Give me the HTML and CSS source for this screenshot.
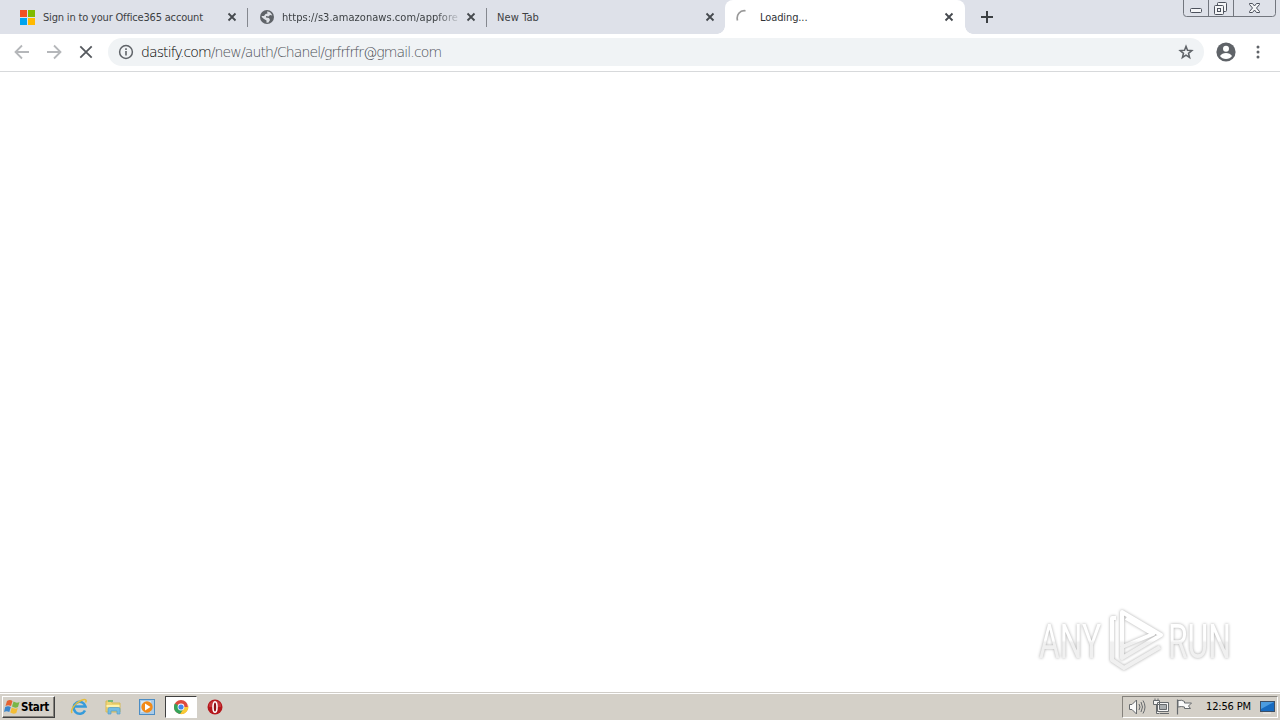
FILE: index.html
```html
<!DOCTYPE html>
<html lang="en">
<head>
<meta charset="utf-8">
<title>Loading...</title>
<link rel="stylesheet" href="styles.css">
</head>
<body>
<div class="screen">
  <header class="tabstrip">
    <div class="tab first">
      <svg class="fav" width="16" height="16"><path fill="#f25022" d="M0 1h7v7H0z"/><path fill="#7fba00" d="M8 1h7v7H8z"/><path fill="#00a4ef" d="M0 9h7v7H0z"/><path fill="#ffb900" d="M8 9h7v7H8z"/></svg>
      <span class="title t1">Sign in to your Office365 account</span>
      <svg class="close" width="10" height="10"><path d="M1.500 1.500l7 7M8.500 1.500l-7 7"/></svg>
    </div>
    <div class="tab second">
      <svg class="fav" width="16" height="16" viewBox="0 0 16 16"><circle cx="8" cy="8" r="7" fill="#5f6368"/><path fill="#dee1e6" d="M8 2.500 C10 2.300 12.500 4 13.300 6.500 L11 6 9.500 7.500 7 7 7 8.500 10 9 11 11 9.500 13.500 7.500 13.700 7.500 11.500 5 10 2.700 8 2.700 7 5 7 6.500 5 8.500 4.500z"/></svg>
      <span class="title t2">https://s3.amazonaws.com/appfore</span>
      <svg class="close" width="10" height="10"><path d="M1.500 1.500l7 7M8.500 1.500l-7 7"/></svg>
    </div>
    <div class="tab plain">
      <span class="title t3">New Tab</span>
      <svg class="close" width="10" height="10"><path d="M1.500 1.500l7 7M8.500 1.500l-7 7"/></svg>
    </div>
    <div class="tab active">
      <svg class="fav" width="16" height="16"><path d="M1.500 11.500C0 6 4 1 9.500 1.800" fill="none" stroke="#999" stroke-width="1.700"/></svg>
      <span class="title t4">Loading...</span>
      <svg class="close" width="10" height="10"><path d="M1.500 1.500l7 7M8.500 1.500l-7 7"/></svg>
    </div>
    <svg class="plus" width="14" height="14"><path d="M7 1v12M1 7h12" stroke="#3c4043" stroke-width="2"/></svg>
    <div class="winctl">
      <svg width="93" height="18" fill="none" stroke="#72767e"><path d="M.5 0v13.500q0 3 3 3h86q3 0 3-3V0M25.500 0v16M50.500 0v16"/><g stroke="#4c515c" fill="#f4f5f7"><rect x="7.500" y="8.500" width="11" height="4" rx="1"/><rect x="34.500" y="2.500" width="9" height="9" rx="1"/><rect x="31.500" y="5.500" width="9" height="9" rx="1"/><rect x="34.500" y="8.500" width="3" height="3"/><path d="M66.500 3.500h3l2 2.500 2-2.500h3v1l-3 3.500 3 3.500v1h-3l-2-2.500-2 2.500h-3v-1l3-3.500-3-3.500z"/></g></svg>
    </div>
  </header>
  <div class="toolbar">
    <svg class="nav" width="94" height="24" fill="none" stroke-width="1.800"><path stroke="#b5b7ba" d="M15 12H2M8 5.500L1.500 12 8 18.500M33 12h13M40 5.500l6.500 6.500-6.500 6.500"/><path stroke="#55595e" stroke-width="1.800" d="M66.300 6.300l11.400 11.400M77.700 6.300L66.300 17.700"/></svg>
    <div class="omnibox">
      <svg class="info" width="16" height="16"><circle cx="8" cy="8" r="6.400" fill="none" stroke="#5f6368" stroke-width="1.500"/><path d="M7.200 7h1.600v4.500H7.200zM7.200 4.300h1.600v1.600H7.200z" fill="#5f6368"/></svg>
      <span class="url"><span class="host">dastify.com</span><span class="path">/new/auth/Chanel/grfrfrfr@gmail.com</span></span>
      <svg class="star" width="16" height="16"><path d="M8 2.300l1.500 4 4.300.3-3.300 2.700 1.100 4.200L8 11.200l-3.600 2.300 1.100-4.200-3.300-2.700 4.300-.3z" fill="none" stroke="#5f6368" stroke-width="1.500"/></svg>
    </div>
    <svg class="user" width="20" height="20"><circle cx="10" cy="10" r="9.600" fill="#5f6368"/><circle cx="10" cy="6.700" r="3" fill="#fff"/><path d="M4 14q2-3 6-3t6 3q-2 3-6 3t-6-3" fill="#fff"/></svg>
    <svg class="dots" width="4" height="16" fill="#5f6368"><circle cx="2" cy="3" r="1.500"/><circle cx="2" cy="8" r="1.500"/><circle cx="2" cy="13" r="1.500"/></svg>
  </div>
  <main class="page">
    <svg class="watermark" width="220" height="80">
      <defs><linearGradient id="shade" gradientUnits="userSpaceOnUse" x1="0" y1="8" x2="0" y2="72"><stop offset=".5" stop-color="#fff"/><stop offset=".54" stop-color="#f0f0f0"/></linearGradient></defs>
      <g class="mark">
        <text x="14" y="58" textLength="62" lengthAdjust="spacingAndGlyphs">ANY</text>
        <text x="143" y="58" textLength="63" lengthAdjust="spacingAndGlyphs">RUN</text>
        <path d="M97 46V12l39 23-39 23V47l31-13-27-16M91 18h-4v42l12 8 36-21"/>
      </g>
    </svg>
  </main>
  <footer class="taskbar">
    <div class="start">
      <svg width="17" height="17"><path fill="#e56332" d="M3 3q3-2 5.500 0L7 8Q4 6.500 1.500 8z"/><path fill="#79b648" d="M9.500 3.500q3 2 6 .5L14 9q-3 1.500-6-.5z"/><path fill="#3b86cc" d="M1.200 9Q4 7.500 6.800 9l-1.500 5q-2.800-1.500-5.300 0z"/><path fill="#f3bd35" d="M7.800 9.500q3 2 6 .5l-1.500 5q-3 1.500-6-.5z"/></svg>
      <span>Start</span>
    </div>
    <div class="launch">
      <svg width="18" height="18"><path d="M15 12.500a6 6 0 1 1 .5-4H5" fill="none" stroke="#369bda" stroke-width="2.600"/><path d="M2 15C0 12 5 5 11 2.500c5-2 6-.5 4.500 2" fill="none" stroke="#e5bd3c" stroke-width="1.500"/></svg>
    </div>
    <div class="launch">
      <svg width="18" height="18"><path d="M2 3h5l1 2h8v9H2z" fill="#efd574" stroke="#d6b956"/><path d="M4 2h5v2H4z" fill="#76b979"/><path d="M2.500 7h13v2h-13z" fill="#fff2ab"/><path d="M4 16v-5q0-1.500 1.500-1.500h9q1.500 0 1.500 1.500v5h-3v-3H7v3z" fill="#74bce2" stroke="#559dc8" stroke-width=".7"/></svg>
    </div>
    <div class="launch">
      <svg width="18" height="18"><rect x="1.500" y="1.500" width="15" height="15" fill="#a9cbe8" stroke="#4c8dc4"/><rect x="3" y="3" width="10" height="11" fill="#d4e7f5"/><circle cx="9" cy="9" r="5.700" fill="#f28a18"/><path d="M7 5.500l5.500 3.500L7 12.500z" fill="#fff"/></svg>
    </div>
    <div class="launch pressed">
      <svg width="16" height="16" viewBox="0 0 16 16"><circle cx="8" cy="8" r="7" fill="#dd4b3e"/><path d="M8 8L1.900 4.600A7 7 0 0 0 7.200 15l3.800-5z" fill="#35a45a"/><path d="M8 8h6.900l0-2.500A7 7 0 0 1 7.200 15L11 9z" fill="#f9cb35"/><circle cx="8" cy="8" r="3.400" fill="#fff"/><circle cx="8" cy="8" r="2.600" fill="#4286ed"/></svg>
    </div>
    <div class="launch">
      <svg width="16" height="16"><circle cx="8" cy="8" r="7.500" fill="#b5171c"/><path d="M2 5q6-7 12 0v3H2z" fill="#d7575a" opacity=".5"/><ellipse cx="8" cy="8" rx="2" ry="5.300" fill="#8e1115" stroke="#fff" stroke-width="1.600"/></svg>
    </div>
    <div class="tray">
      <svg class="trayicons" width="70" height="18" fill="none" stroke="#666a6d"><path fill="#fafafa" d="M1.500 6.500H4L8.500 2v14L4 11.500H1.500z"/><path d="M11 6q2 3 0 6M13 4q3 5 0 10M15 2.500q4 6.500 0 13"/><path fill="#f6f6f6" d="M29.500 4.500h11v9h-11zM25.500 2.500h6v4h-6zM27 .5v2M30 .5v2M28.500 6.500v9h3"/><path d="M31.500 6.500h7v5h-7z" fill="#aaaeb0"/><path d="M32 15.500h9M49.500 1.500v15" stroke-width="1.200"/><path fill="#fafafa" d="M50 2.500q4-1 6.500 1v1.500h7l-3 3 2 2.500h-6V9q-3-1-6.500 0z"/></svg>
      <time>12:56 PM</time>
      <svg class="desk" width="16" height="14"><rect x=".5" y="1.500" width="14" height="10" fill="#176bc0" stroke="#3d4f65"/><path d="M1 2h13L1 9z" fill="#4b9ce0"/><path d="M3 13h8" stroke="#eee"/></svg>
    </div>
  </footer>
</div>
</body>
</html>
```
FILE: styles.css
```css
* { box-sizing: border-box; }
body { margin: 0; font-family: "DejaVu Sans Condensed", "DejaVu Sans", sans-serif; }
svg { display: block; flex: none; }
.screen { width: 1280px; height: 720px; display: flex; flex-direction: column; overflow: hidden; background: #fff; }
.tabstrip { height: 34px; flex: none; display: flex; background: #dee1e9; }
.tab { width: 239px; height: 34px; flex: none; display: flex; align-items: center; padding: 0 10px 0 11px; position: relative; font-size: 11px; color: #3c4043; }
.first { width: 248px; padding-left: 20px; }
.first, .second { padding-right: 11px; background: linear-gradient(#85888f, #85888f) right 0 top 8px / 1px 19px no-repeat; }
.plain { padding-left: 10px; width: 238px; }
.active { width: 240px; background: #fff; border-radius: 8px 8px 0 0; color: #303336; padding-right: 11px; }
.active::before, .active::after { content: ""; position: absolute; bottom: 0; width: 8px; height: 8px; }
.active::before { left: -8px; background: radial-gradient(circle at 0 0, transparent 7.5px, #fff 8px); }
.active::after { right: -8px; background: radial-gradient(circle at 100% 0, transparent 7.5px, #fff 8px); }
.title { margin-left: 7px; padding-top: 1px; white-space: nowrap; line-height: 17px; }
.plain .title { margin-left: 0; }
.active .title { margin-left: 8px; }
.t1 { letter-spacing: -0.18px; }
.t2 { letter-spacing: 0.05px; width: 177px; -webkit-mask-image: linear-gradient(90deg, #000 154px, transparent 180px); mask-image: linear-gradient(90deg, #000 154px, transparent 180px); }
.t3 { letter-spacing: 0.1px; }
.t4 { letter-spacing: -0.1px; }
.close { margin-left: auto; stroke: #45494e; stroke-width: 1.8; }
.plus { margin: 10px 0 0 15px; }
.winctl { margin: 0 4px 0 auto; }
.toolbar { height: 38px; flex: none; display: flex; align-items: center; padding: 0 20px 1px 14px; border-bottom: 1px solid #d7d9db; }
.omnibox { width: 1096px; height: 28px; border-radius: 14px; background: #f0f3f5; display: flex; align-items: center; padding: 0 10px; }
.url { margin-left: 7px; font: 200 14px "DejaVu Sans Light", "DejaVu Sans ExtraLight", "DejaVu Sans", sans-serif; letter-spacing: -0.88px; white-space: nowrap; }
.host { color: #000; }
.path { color: #4c5056; }
.star { margin-left: auto; }
.user { margin-left: 12px; }
.dots { margin-left: auto; }
.page { flex: 1; display: flex; justify-content: flex-end; align-items: flex-end; padding: 0 35px 12px 0; }
.mark { filter: blur(.4px) drop-shadow(0 0 1.5px #aaa); }
.mark text { font: 49px "Liberation Sans Narrow", Roboto, sans-serif; fill: url(#shade); }
.mark path { fill: none; stroke: url(#shade); stroke-width: 4; stroke-linejoin: round; }
.taskbar { height: 28px; flex: none; display: flex; align-items: center; border-top: 1px solid #d0cdc8; box-shadow: inset 0 1px #fff; background: #d4d0c8; padding: 0 2px; }
.start { width: 53px; height: 22px; display: flex; align-items: center; padding: 0 1px; margin-right: 8px; border: 1px solid; border-color: #fff #404040 #404040 #fff; box-shadow: inset -1px -1px #85827c; font: bold 11.5px "DejaVu Sans Condensed", sans-serif; letter-spacing: -0.3px; color: #000; }
.launch { width: 32px; height: 22px; margin-right: 2px; display: grid; place-items: center; flex: none; }
.pressed { background: #fff; border: 1px solid; border-color: #404040 #fff #fff #404040; }
.tray { width: 156px; height: 22px; margin-left: auto; display: flex; align-items: center; padding: 0 1px 0 5px; border: 1px solid; border-color: #85827c #fff #fff #85827c; }
.tray time { margin-left: 8px; font-size: 11px; letter-spacing: -0.15px; white-space: nowrap; color: #000; }
.desk { margin-left: auto; }
```
